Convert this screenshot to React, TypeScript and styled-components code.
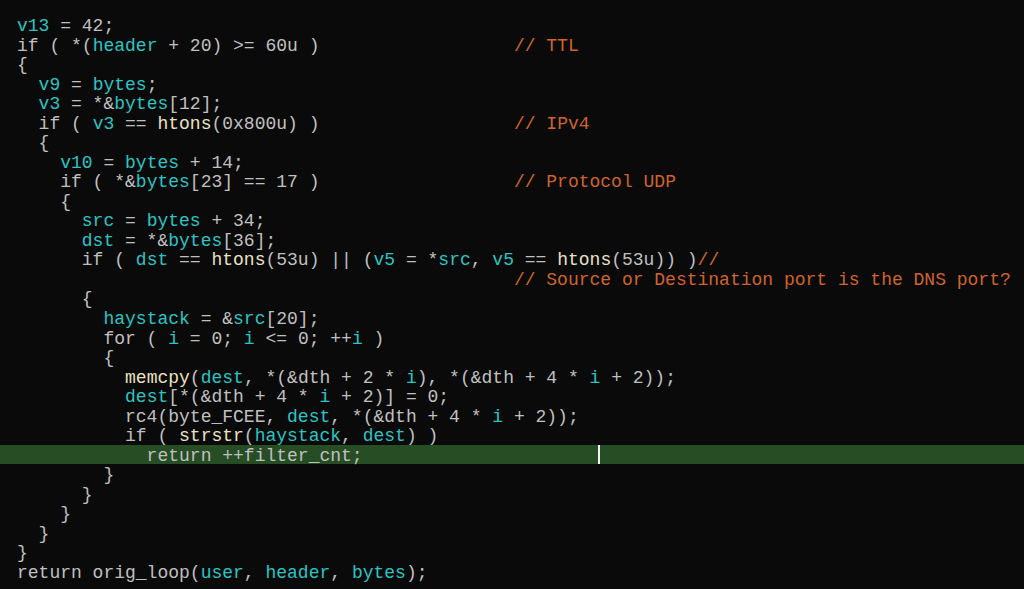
import React from "react";
import styled, { createGlobalStyle } from "styled-components";

const Global = createGlobalStyle`
  html, body { margin: 0; padding: 0; background: #0a0a0a; }
  body { width: 1024px; height: 589px; overflow: hidden; }
`;

const Listing = styled.div`
  padding-top: 15px;
  font-family: "Liberation Mono", "Courier New", monospace;
  font-size: 18px;
  color: #c0c0c0;
  background: #0a0a0a;
  height: 589px;
  box-sizing: border-box;
`;

const Line = styled.div<{ $active?: boolean }>`
  box-sizing: border-box;
  height: 19.54px;
  padding-top: 4px;
  line-height: 15.54px;
  padding-left: 17px;
  white-space: pre;
  background: ${(p) => (p.$active ? "#264d24" : "transparent")};
`;

const Tok = styled.span<{ $kind: "var" | "fn" | "cmt" | "txt" }>`
  color: ${(p) =>
    p.$kind === "var"
      ? "#2cc4c4"
      : p.$kind === "fn"
      ? "#ece2c2"
      : p.$kind === "cmt"
      ? "#cf642d"
      : "#c0c0c0"};
`;

const Caret = styled.span`
  display: inline-block;
  width: 2px;
  height: 19.54px;
  margin-left: -2px;
  margin-top: -4px;
  vertical-align: top;
  background: #f2f2f2;
`;

const VARS = new Set([
  "v13", "header", "v9", "bytes", "v3", "v10", "src", "dst", "v5",
  "haystack", "i", "dest", "user",
]);
const FNS = new Set(["htons", "memcpy", "strstr"]);

const pad = (s: string, col: number) => s + " ".repeat(Math.max(0, col - s.length));
const C = 46;

const lines: string[] = [
  "v13 = 42;",
  pad("if ( *(header + 20) >= 60u )", C) + "// TTL",
  "{",
  "  v9 = bytes;",
  "  v3 = *&bytes[12];",
  pad("  if ( v3 == htons(0x800u) )", C) + "// IPv4",
  "  {",
  "    v10 = bytes + 14;",
  pad("    if ( *&bytes[23] == 17 )", C) + "// Protocol UDP",
  "    {",
  "      src = bytes + 34;",
  "      dst = *&bytes[36];",
  "      if ( dst == htons(53u) || (v5 = *src, v5 == htons(53u)) )//",
  pad("", C) + "// Source or Destination port is the DNS port?",
  "      {",
  "        haystack = &src[20];",
  "        for ( i = 0; i <= 0; ++i )",
  "        {",
  "          memcpy(dest, *(&dth + 2 * i), *(&dth + 4 * i + 2));",
  "          dest[*(&dth + 4 * i + 2)] = 0;",
  "          rc4(byte_FCEE, dest, *(&dth + 4 * i + 2));",
  "          if ( strstr(haystack, dest) )",
  "            return ++filter_cnt;",
  "        }",
  "      }",
  "    }",
  "  }",
  "}",
  "return orig_loop(user, header, bytes);",
];

type Kind = "var" | "fn" | "cmt" | "txt";

function tokenize(line: string): { k: Kind; t: string }[] {
  const out: { k: Kind; t: string }[] = [];
  const ci = line.indexOf("//");
  const code = ci >= 0 ? line.slice(0, ci) : line;
  const re = /[A-Za-z_][A-Za-z0-9_]*|[^A-Za-z_]+/g;
  let m: RegExpExecArray | null;
  while ((m = re.exec(code))) {
    const w = m[0];
    const k: Kind = VARS.has(w) ? "var" : FNS.has(w) ? "fn" : "txt";
    const last = out[out.length - 1];
    if (last && last.k === k) last.t += w;
    else out.push({ k, t: w });
  }
  if (ci >= 0) out.push({ k: "cmt", t: line.slice(ci) });
  return out;
}

const ACTIVE = 22;
const CARET_COL = 54;

export default function App() {
  return (
    <>
      <Global />
      <Listing>
        {lines.map((l, idx) => (
          <Line key={idx} $active={idx === ACTIVE}>
            {tokenize(l).map((tk, j) => (
              <Tok key={j} $kind={tk.k}>
                {tk.t}
              </Tok>
            ))}
            {idx === ACTIVE && (
              <>
                {" ".repeat(CARET_COL - l.length)}
                <Caret />
              </>
            )}
          </Line>
        ))}
      </Listing>
    </>
  );
}
